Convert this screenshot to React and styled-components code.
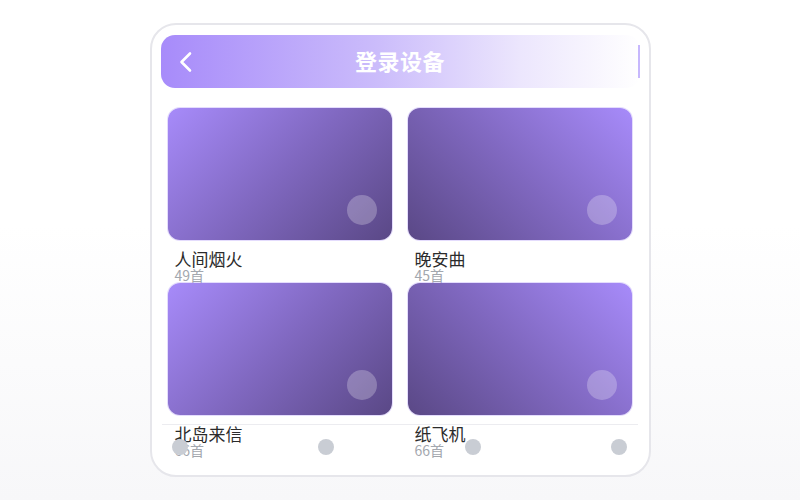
import React from 'react';
import styled, { createGlobalStyle } from 'styled-components';

const GlobalStyle = createGlobalStyle`
  html, body {
    margin: 0;
    padding: 0;
  }
  body {
    width: 800px;
    height: 500px;
    background: linear-gradient(to bottom, #ffffff 0%, #ffffff 45%, #f7f7f9 100%);
    font-family: "Noto Sans CJK SC", "Noto Sans", sans-serif;
    overflow: hidden;
  }
`;

const Stage = styled.div`
  display: flex;
  justify-content: center;
  padding-top: 23px;
`;

const Phone = styled.div`
  position: relative;
  width: 501px;
  height: 454px;
  box-sizing: border-box;
  border: 2px solid #e6e6eb;
  border-radius: 26px;
  background: #fff;
  padding-top: 10px;
  overflow: hidden;
`;

const Header = styled.div`
  display: grid;
  grid-template-columns: 1fr auto 1fr;
  align-items: center;
  height: 53px;
  margin: 0 9px;
  border-radius: 14px;
  background: linear-gradient(90deg, #a78bfa 0%, #cbbcfb 45%, #ece6fd 75%, #ffffff 100%);
`;

const Back = styled.div`
  display: flex;
  align-items: center;
  padding-left: 17px;
`;

const Title = styled.div`
  color: #fff;
  font-size: 22px;
  line-height: 1;
  font-weight: 700;
  letter-spacing: 0.5px;
  padding-bottom: 3px;
`;

const Edge = styled.div`
  justify-self: end;
  width: 1.5px;
  height: 33px;
  background: #c7b8fd;
`;

const Grid = styled.div`
  display: grid;
  grid-template-columns: 1fr 1fr;
  grid-auto-rows: 175px;
  column-gap: 16px;
  margin-top: 20px;
  padding: 0 17px 0 16px;
`;

const Item = styled.div`
  display: flex;
  flex-direction: column;
  min-height: 0;
`;

const Cover = styled.div`
  position: relative;
  flex: none;
  height: 132px;
  border-radius: 12px;
  background: linear-gradient(${p => (p.$flip ? '225deg' : '135deg')}, #a78bfa 0%, #8068c0 50%, #5a4886 100%);
  box-shadow: 0 0 0 1px rgba(167, 139, 250, 0.3);
`;

const PlayDot = styled.span`
  position: absolute;
  right: 15px;
  bottom: 15px;
  width: 30px;
  height: 30px;
  border-radius: 50%;
  background: rgba(255, 255, 255, 0.25);
`;

const Name = styled.div`
  margin-top: 8px;
  padding-left: 7px;
  font-size: 17px;
  line-height: 22px;
  color: #2b2b2b;
`;

const Count = styled.div`
  margin-top: -4px;
  padding-left: 7px;
  font-size: 14px;
  line-height: 18px;
  color: #a3a7ae;
`;

const TabBar = styled.div`
  position: absolute;
  left: 10px;
  right: 11px;
  bottom: 7px;
  height: 44px;
  box-sizing: border-box;
  display: flex;
  justify-content: space-between;
  align-items: center;
  padding: 0 10px;
  border-top: 1px solid #ececf0;
`;

const TabDot = styled.span`
  width: 16px;
  height: 16px;
  border-radius: 50%;
  background: #c9cdd4;
`;

const albums = [
  { name: '人间烟火', count: 49 },
  { name: '晚安曲', count: 45 },
  { name: '北岛来信', count: 66 },
  { name: '纸飞机', count: 66 },
];

export default function App() {
  return (
    <>
      <GlobalStyle />
      <Stage>
        <Phone>
          <Header>
            <Back>
              <svg width="16" height="22" viewBox="0 0 16 22" fill="none">
                <path d="M12 2.5 L3.5 11 L12 19.5" stroke="#fff" strokeWidth="2.6" strokeLinecap="round" strokeLinejoin="round" />
              </svg>
            </Back>
            <Title>登录设备</Title>
            <Edge />
          </Header>
          <Grid>
            {albums.map((a, i) => (
              <Item key={a.name}>
                <Cover $flip={i % 2 === 1}>
                  <PlayDot />
                </Cover>
                <Name>{a.name}</Name>
                <Count>{a.count}首</Count>
              </Item>
            ))}
          </Grid>
          <TabBar>
            <TabDot />
            <TabDot />
            <TabDot />
            <TabDot />
          </TabBar>
        </Phone>
      </Stage>
    </>
  );
}
